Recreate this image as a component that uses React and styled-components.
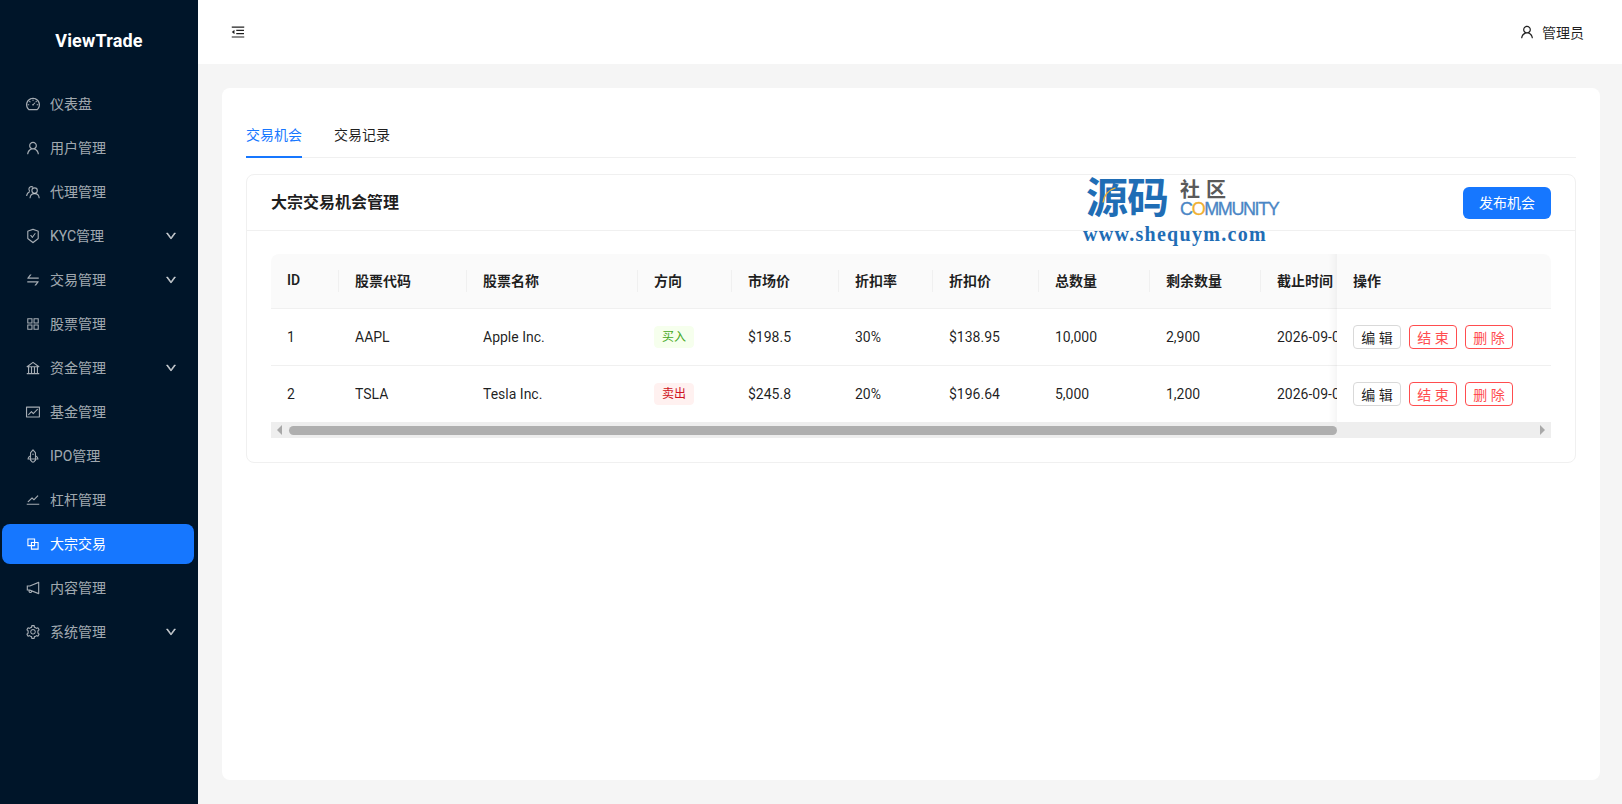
import styled, { createGlobalStyle } from "styled-components";
import {
  AiOutlineDashboard,
  AiOutlineUser,
  AiOutlineSafetyCertificate,
  AiOutlineSwap,
  AiOutlineAppstore,
  AiOutlineBank,
  AiOutlineFund,
  AiOutlineRocket,
  AiOutlineStock,
  AiOutlineBlock,
  AiOutlineNotification,
  AiOutlineSetting,
  AiOutlineDown,
  AiOutlineMenuFold,
} from "react-icons/ai";

const GlobalStyle = createGlobalStyle`
  html, body {
    margin: 0;
    padding: 0;
    background: #f5f5f5;
  }
  body {
    font-family: Roboto, "Noto Sans CJK SC", sans-serif;
    font-size: 14px;
    color: rgba(0, 0, 0, 0.88);
  }
  * {
    box-sizing: border-box;
  }
`;

const Layout = styled.div`
  display: flex;
  width: 1622px;
  height: 804px;
  overflow: hidden;
`;

const Sider = styled.aside`
  flex: 0 0 198px;
  background: #001529;
`;

const Logo = styled.div`
  height: 64px;
  padding-top: 16px;
  display: flex;
  align-items: center;
  justify-content: center;
  color: #fff;
  font-size: 18px;
  font-weight: 700;
  letter-spacing: 0.2px;
`;

const Menu = styled.nav`
  display: flex;
  flex-direction: column;
  gap: 4px;
  padding: 20px 4px 0 2px;
`;

const MenuItem = styled.div`
  height: 40px;
  padding: 0 17px 0 23px;
  display: flex;
  align-items: center;
  gap: 9px;
  border-radius: 8px;
  color: ${(p) => (p.$active ? "#fff" : "rgba(255, 255, 255, 0.65)")};
  background: ${(p) => (p.$active ? "#1677ff" : "transparent")};
  svg {
    font-size: 16px;
    flex: none;
  }
  span {
    flex: 1;
    padding-bottom: 2px;
  }
`;

const Main = styled.div`
  flex: 1;
  min-width: 0;
  display: flex;
  flex-direction: column;
`;

const Header = styled.header`
  height: 64px;
  background: #fff;
  display: flex;
  align-items: center;
  justify-content: space-between;
  padding: 0 38px 0 32px;
  svg {
    font-size: 16px;
    display: block;
  }
`;

const UserBox = styled.div`
  display: flex;
  align-items: center;
  gap: 7px;
`;

const Content = styled.main`
  flex: 1;
  margin: 24px 22px 24px 24px;
  padding: 24px;
  background: #fff;
  border-radius: 8px;
`;

const Tabs = styled.div`
  display: flex;
  gap: 32px;
  height: 46px;
  border-bottom: 1px solid #f0f0f0;
  margin-bottom: 16px;
`;

const Tab = styled.div`
  padding: 12px 0;
  height: 46px;
  line-height: 22px;
  color: ${(p) => (p.$active ? "#1677ff" : "rgba(0, 0, 0, 0.88)")};
  border-bottom: 2px solid ${(p) => (p.$active ? "#1677ff" : "transparent")};
`;

const Card = styled.section`
  position: relative;
  border: 1px solid #f0f0f0;
  border-radius: 8px;
`;

const CardHead = styled.div`
  height: 56px;
  padding: 0 24px;
  display: flex;
  align-items: center;
  justify-content: space-between;
  border-bottom: 1px solid #f0f0f0;
`;

const CardTitle = styled.div`
  font-size: 16px;
  font-weight: 600;
  padding-bottom: 3px;
`;

const PrimaryButton = styled.button`
  height: 32px;
  width: 88px;
  border: 0;
  padding: 0 0 2px;
  border-radius: 6px;
  background: #1677ff;
  color: #fff;
  font: inherit;
`;

const CardBody = styled.div`
  padding: 23px 24px 24px;
`;

const TableScroll = styled.div`
  overflow: hidden;
  border-radius: 8px 8px 0 0;
`;

const Table = styled.table`
  width: 1400px;
  table-layout: fixed;
  border-collapse: separate;
  border-spacing: 0;
`;

const Th = styled.th`
  position: relative;
  height: 55px;
  padding: 0 16px 3px;
  background: #fafafa;
  font-weight: 600;
  text-align: left;
  white-space: nowrap;
  border-bottom: 1px solid #f0f0f0;
  &::before {
    content: "";
    display: ${(p) => (p.$noDivider ? "none" : "block")};
    position: absolute;
    right: 0;
    top: 50%;
    width: 1px;
    height: 22px;
    transform: translateY(-50%);
    background: #f0f0f0;
  }
`;

const Td = styled.td`
  height: ${(p) => (p.$last ? "56px" : "57px")};
  padding: 0 16px;
  white-space: nowrap;
  overflow: hidden;
  color: rgba(0, 0, 0, 0.88);
  border-bottom: ${(p) => (p.$last ? "none" : "1px solid #f0f0f0")};
`;

const FixedTh = styled(Th)`
  position: sticky;
  right: 0;
  z-index: 2;
  &::after {
    content: "";
    position: absolute;
    left: -10px;
    top: 0;
    bottom: -1px;
    width: 10px;
    box-shadow: inset -10px 0 8px -8px rgba(5, 5, 5, 0.06);
  }
`;

const FixedTd = styled(Td)`
  position: sticky;
  right: 0;
  z-index: 2;
  overflow: visible;
  background: #fff;
  &::after {
    content: "";
    position: absolute;
    left: -10px;
    top: 0;
    bottom: -1px;
    width: 10px;
    box-shadow: inset -10px 0 8px -8px rgba(5, 5, 5, 0.06);
  }
`;

const Tag = styled.span`
  display: inline-block;
  height: 22px;
  line-height: 20px;
  padding: 0 7px;
  font-size: 12px;
  border-radius: 4px;
  border: 1px solid ${(p) => (p.$sell ? "#fff1f0" : "#f6ffed")};
  background: ${(p) => (p.$sell ? "#fff1f0" : "#f6ffed")};
  color: ${(p) => (p.$sell ? "#cf1322" : "#45a81c")};
`;

const Actions = styled.div`
  display: flex;
  gap: 8px;
`;

const SmallButton = styled.button`
  width: 48px;
  height: 24px;
  padding: 0;
  background: #fff;
  border: 1px solid ${(p) => (p.$danger ? "#ff4d4f" : "#d9d9d9")};
  border-radius: 4px;
  color: ${(p) => (p.$danger ? "#ff4d4f" : "rgba(0, 0, 0, 0.88)")};
  font: inherit;
`;

const ScrollTrack = styled.div`
  height: 16px;
  padding: 0 6px;
  display: flex;
  align-items: center;
  background: #eeeeee;
  position: relative;
  z-index: 3;
`;

const Arrow = styled.i`
  flex: none;
  width: 0;
  height: 0;
  border-top: 5px solid transparent;
  border-bottom: 5px solid transparent;
  ${(p) =>
    p.$right
      ? "border-left: 5px solid #a8a8a8; margin-left: auto;"
      : "border-right: 5px solid #a8a8a8;"}
`;

const ScrollThumb = styled.div`
  flex: none;
  width: 1048px;
  height: 9px;
  margin-left: 7px;
  border-radius: 5px;
  background: #afafaf;
`;

/* site watermark laid over the card */
const Watermark = styled.div`
  position: absolute;
  left: 836px;
  top: 2px;
  width: 200px;
  pointer-events: none;
`;

const MarkTop = styled.div`
  display: flex;
  align-items: flex-start;
  padding-left: 3px;
  height: 47px;
`;

const MarkBig = styled.div`
  position: relative;
  font-size: 42px;
  line-height: 44px;
  font-weight: 700;
  color: #1f6db5;
  letter-spacing: -1px;
  svg {
    position: absolute;
    left: 16px;
    top: 10px;
  }
`;

const MarkSide = styled.div`
  margin: 3px 0 0 12px;
  display: flex;
  flex-direction: column;
`;

const MarkCn = styled.div`
  font-size: 20px;
  line-height: 20px;
  font-weight: 700;
  color: #5a5a5a;
  letter-spacing: 6px;
`;

const MarkEn = styled.div`
  font-family: "Liberation Sans", sans-serif;
  font-size: 18px;
  line-height: 18px;
  letter-spacing: -1.4px;
  color: #4a86c5;
  white-space: nowrap;
  -webkit-text-stroke: 0.3px #4a86c5;
  b {
    font-weight: 400;
    color: #f0b030;
    -webkit-text-stroke: 0.3px #f0b030;
  }
`;

const MarkUrl = styled.div`
  font-family: "Liberation Serif", serif;
  font-size: 20px;
  line-height: 20px;
  font-weight: 700;
  letter-spacing: 1.3px;
  color: #1f6db5;
  white-space: nowrap;
`;

// two overlapping people, the agent entry in the menu
const AgentIcon = () => (
  <svg width="16" height="16" viewBox="0 0 16 16" fill="none" stroke="currentColor" strokeWidth="1.1">
    <circle cx="9.6" cy="6.6" r="2.7" />
    <path d="M5 14.2c.2-2.8 2.2-4.6 4.6-4.6s4.4 1.8 4.6 4.6" />
    <path d="M8.2 3.3A2.6 2.6 0 0 0 3.9 5.1c0 .8.3 1.4.8 1.9" />
    <path d="M1.6 12c.2-2.1 1.3-3.7 3.2-4.6" />
  </svg>
);

const menu = [
  { icon: AiOutlineDashboard, label: "仪表盘" },
  { icon: AiOutlineUser, label: "用户管理" },
  { icon: AgentIcon, label: "代理管理" },
  { icon: AiOutlineSafetyCertificate, label: "KYC管理", sub: true },
  { icon: AiOutlineSwap, label: "交易管理", sub: true },
  { icon: AiOutlineAppstore, label: "股票管理" },
  { icon: AiOutlineBank, label: "资金管理", sub: true },
  { icon: AiOutlineFund, label: "基金管理" },
  { icon: AiOutlineRocket, label: "IPO管理" },
  { icon: AiOutlineStock, label: "杠杆管理" },
  { icon: AiOutlineBlock, label: "大宗交易", active: true },
  { icon: AiOutlineNotification, label: "内容管理" },
  { icon: AiOutlineSetting, label: "系统管理", sub: true },
];

const columns = [
  ["ID", 68],
  ["股票代码", 128],
  ["股票名称", 171],
  ["方向", 94],
  ["市场价", 107],
  ["折扣率", 94],
  ["折扣价", 106],
  ["总数量", 111],
  ["剩余数量", 111],
  ["截止时间", 196],
];

const rows = [
  { id: 1, code: "AAPL", name: "Apple Inc.", sell: false, price: "$198.5", rate: "30%", off: "$138.95", total: "10,000", left: "2,900" },
  { id: 2, code: "TSLA", name: "Tesla Inc.", sell: true, price: "$245.8", rate: "20%", off: "$196.64", total: "5,000", left: "1,200" },
];

export default function App() {
  return (
    <>
      <GlobalStyle />
      <Layout>
        <Sider>
          <Logo>ViewTrade</Logo>
          <Menu>
            {menu.map(({ icon: Icon, label, sub, active }) => (
              <MenuItem key={label} $active={active}>
                <Icon />
                <span>{label}</span>
                {sub && <AiOutlineDown size={12} strokeWidth={70} />}
              </MenuItem>
            ))}
          </Menu>
        </Sider>
        <Main>
          <Header>
            <AiOutlineMenuFold />
            <UserBox>
              <AiOutlineUser />
              <span>管理员</span>
            </UserBox>
          </Header>
          <Content>
            <Tabs>
              <Tab $active>交易机会</Tab>
              <Tab>交易记录</Tab>
            </Tabs>
            <Card>
              <CardHead>
                <CardTitle>大宗交易机会管理</CardTitle>
                <PrimaryButton>发布机会</PrimaryButton>
              </CardHead>
              <CardBody>
                <TableScroll>
                  <Table>
                    <colgroup>
                      {columns.map(([name, w]) => (
                        <col key={name} width={w} />
                      ))}
                      <col width={214} />
                    </colgroup>
                    <thead>
                      <tr>
                        {columns.map(([name], i) => (
                          <Th key={name} $noDivider={i === columns.length - 1}>
                            {name}
                          </Th>
                        ))}
                        <FixedTh $noDivider>操作</FixedTh>
                      </tr>
                    </thead>
                    <tbody>
                      {rows.map((r, i) => {
                        const last = i === rows.length - 1;
                        return (
                          <tr key={r.id}>
                            <Td $last={last}>{r.id}</Td>
                            <Td $last={last}>{r.code}</Td>
                            <Td $last={last}>{r.name}</Td>
                            <Td $last={last}>
                              <Tag $sell={r.sell}>{r.sell ? "卖出" : "买入"}</Tag>
                            </Td>
                            <Td $last={last}>{r.price}</Td>
                            <Td $last={last}>{r.rate}</Td>
                            <Td $last={last}>{r.off}</Td>
                            <Td $last={last}>{r.total}</Td>
                            <Td $last={last}>{r.left}</Td>
                            <Td $last={last}>2026-09-01 18:00:00</Td>
                            <FixedTd $last={last}>
                              <Actions>
                                <SmallButton>编 辑</SmallButton>
                                <SmallButton $danger>结 束</SmallButton>
                                <SmallButton $danger>删 除</SmallButton>
                              </Actions>
                            </FixedTd>
                          </tr>
                        );
                      })}
                    </tbody>
                  </Table>
                </TableScroll>
                <ScrollTrack>
                  <Arrow />
                  <ScrollThumb />
                  <Arrow $right />
                </ScrollTrack>
              </CardBody>
              <Watermark>
                <MarkTop>
                  <MarkBig>
                    源码
                    <svg width="14" height="16" viewBox="0 0 14 16">
                      <path d="M1 15.5C2 9 6 3 13.5 .8" fill="none" stroke="#f0b030" strokeWidth="1.4" />
                    </svg>
                  </MarkBig>
                  <MarkSide>
                    <MarkCn>社区</MarkCn>
                    <MarkEn>
                      C<b>O</b>MMUNITY
                    </MarkEn>
                  </MarkSide>
                </MarkTop>
                <MarkUrl>www.shequym.com</MarkUrl>
              </Watermark>
            </Card>
          </Content>
        </Main>
      </Layout>
    </>
  );
}
